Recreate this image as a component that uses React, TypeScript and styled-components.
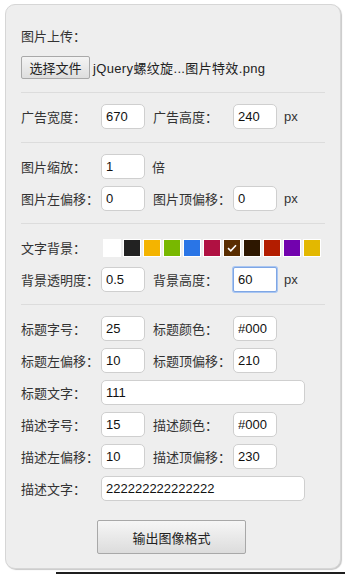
import styled, { createGlobalStyle } from "styled-components";

const GlobalStyle = createGlobalStyle`
	body {
		margin: 0;
		background: #fff;
		font-family: "Liberation Sans", "Noto Sans CJK SC", sans-serif;
		font-size: 13px;
		color: #333;
	}
`;

const swatches = [
	"#ffffff",
	"#222222",
	"#f4b400",
	"#78b800",
	"#2a75e6",
	"#b01142",
	"#5a2d00",
	"#2d1700",
	"#b31d00",
	"#7202ae",
	"#e3b800",
];

interface FieldProps {
	label: string;
	value: string;
	focused?: boolean;
}

const Field = ({ label, value, focused }: FieldProps) => (
	<FieldWrap>
		<Label>{label}</Label>
		<Input defaultValue={value} $focused={focused} />
	</FieldWrap>
);

const App = () => {
	return (
		<>
			<GlobalStyle />
			<Panel>
				<Section $first>
					<Row>
						<span>图片上传：</span>
					</Row>
					<FileRow>
						<FileButton>选择文件</FileButton>
						<FileName>jQuery螺纹旋...图片特效.png</FileName>
					</FileRow>
				</Section>

				<Section $tail={13}>
					<Row>
						<Field label="广告宽度：" value="670" />
						<Field label="广告高度：" value="240" />
						<Unit>px</Unit>
					</Row>
				</Section>

				<Section>
					<Row>
						<Field label="图片缩放：" value="1" />
						<Unit>倍</Unit>
					</Row>
					<Row>
						<Field label="图片左偏移：" value="0" />
						<Field label="图片顶偏移：" value="0" />
						<Unit>px</Unit>
					</Row>
				</Section>

				<Section>
					<Row>
						<Label>文字背景：</Label>
						{swatches.map((color, i) => (
							<Swatch key={color + i} style={{ background: color }}>
								{i === 6 && (
									<svg width="10" height="8" viewBox="0 0 10 8">
										<path d="M1 4.2 L3.8 6.8 L9 1.2" fill="none" stroke="#fff" strokeWidth="1.6" />
									</svg>
								)}
							</Swatch>
						))}
					</Row>
					<Row>
						<Field label="背景透明度：" value="0.5" />
						<Field label="背景高度：" value="60" focused />
						<Unit>px</Unit>
					</Row>
				</Section>

				<Section $last>
					<Row>
						<Field label="标题字号：" value="25" />
						<Field label="标题颜色：" value="#000" />
					</Row>
					<Row>
						<Field label="标题左偏移：" value="10" />
						<Field label="标题顶偏移：" value="210" />
					</Row>
					<Row>
						<Label>标题文字：</Label>
						<Input defaultValue="111" $wide />
					</Row>
					<Row>
						<Field label="描述字号：" value="15" />
						<Field label="描述颜色：" value="#000" />
					</Row>
					<Row>
						<Field label="描述左偏移：" value="10" />
						<Field label="描述顶偏移：" value="230" />
					</Row>
					<Row>
						<Label>描述文字：</Label>
						<Input defaultValue="222222222222222" $wide />
					</Row>
				</Section>

				<Actions>
					<OutputButton>输出图像格式</OutputButton>
				</Actions>
			</Panel>
			<Preview />
		</>
	);
};

export default App;

const Panel = styled.div`
	box-sizing: border-box;
	width: 336px;
	margin: 4px 0 0 5px;
	padding: 0 15px 14px;
	background: #eee;
	border: 1px solid #d6d6d6;
	border-radius: 10px;
	box-shadow: 1px 1px 1px #c8c8c8;
`;

const Section = styled.div<{ $first?: boolean; $last?: boolean; $tail?: number }>`
	padding-top: ${(p) => (p.$first ? 18 : 11)}px;
	padding-bottom: ${(p) => (p.$last ? 0 : p.$tail ?? (p.$first ? 13 : 12))}px;
	border-bottom: ${(p) => (p.$last ? "none" : "1px solid #dcdcdc")};
`;

const Row = styled.div`
	display: flex;
	align-items: center;
	height: 25px;

	& + & {
		margin-top: 7px;
	}
`;

const FileRow = styled.div`
	display: flex;
	align-items: center;
	height: 23px;
	margin-top: 8px;
`;

const FileButton = styled.button`
	box-sizing: border-box;
	height: 23px;
	width: 69px;
	padding: 0;
	font-family: inherit;
	font-size: 13px;
	color: #222;
	background: linear-gradient(#f4f4f4, #dedede);
	border: 1px solid #a9a9a9;
	border-radius: 2px;
`;

const FileName = styled.span`
	margin-left: 3px;
	font-size: 13px;
	letter-spacing: 0.35px;
	color: #222;
`;

const FieldWrap = styled.div`
	display: flex;
	align-items: center;
	margin-right: 8px;
`;

const Label = styled.span`
	flex-shrink: 0;
	width: 80px;
	white-space: nowrap;
`;

const Input = styled.input<{ $wide?: boolean; $focused?: boolean }>`
	box-sizing: border-box;
	width: ${(p) => (p.$wide ? 204 : 44)}px;
	height: 25px;
	padding: 0 4px;
	font-family: inherit;
	font-size: 13px;
	color: #111;
	background: #fff;
	border: 1px solid ${(p) => (p.$focused ? "#7fa6e4" : "#cfcfcf")};
	border-radius: ${(p) => (p.$focused ? 2 : 5)}px;
	box-shadow: ${(p) => (p.$focused ? "0 0 0 1px #a9c6f2" : "none")};
	outline: none;
`;

const Unit = styled.span`
	margin-left: -1px;
`;

const Swatch = styled.div`
	box-sizing: border-box;
	display: flex;
	align-items: center;
	justify-content: center;
	width: 18px;
	height: 18px;
	margin-left: 2px;
	border: 1px solid #fff;
`;

const Actions = styled.div`
	display: flex;
	justify-content: center;
	margin-top: 19px;
	padding-right: 3px;
`;

const OutputButton = styled.button`
	box-sizing: border-box;
	width: 149px;
	height: 34px;
	font-family: inherit;
	font-size: 13px;
	color: #222;
	background: linear-gradient(#f6f6f6, #dcdcdc);
	border: 1px solid #a8a8a8;
	border-radius: 2px;
`;

const Preview = styled.div`
	height: 240px;
	margin: 3px 0 0 56px;
	background: #1e1e1e;
`;
